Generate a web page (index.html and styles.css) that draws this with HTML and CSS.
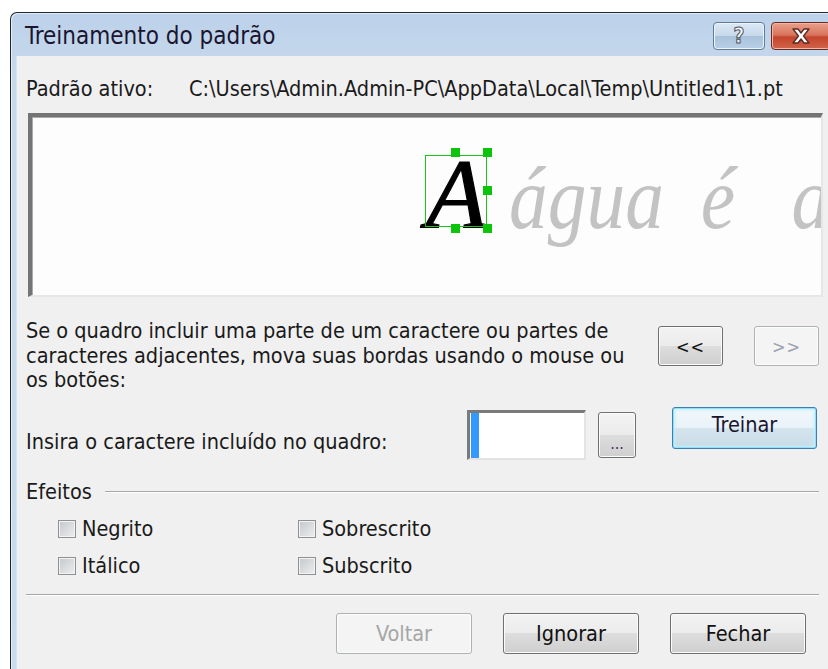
FILE: index.html
```html
<!DOCTYPE html>
<html lang="pt">
<head>
<meta charset="utf-8">
<title>Treinamento do padrão</title>
<link rel="stylesheet" href="styles.css">
</head>
<body>
<div class="window">
  <div class="titlebar">
    <span class="title">Treinamento do padrão</span>
    <div class="caption-buttons">
      <span class="cap-btn help"><span class="help-mark">?</span></span>
      <span class="cap-btn close">
        <svg width="22" height="18" viewBox="0 0 22 18">
          <path d="M3 2h5l3 4 3-4h5l-5.5 7 5.5 7h-5l-3-4-3 4H3l5.5-7z" fill="#fff" stroke="#5a2b22" stroke-width="1.3" stroke-linejoin="round"/>
        </svg>
      </span>
    </div>
  </div>

  <div class="client">
    <div class="active-row">
      <span class="active-label">Padrão ativo:</span>
      <span class="active-path">C:\Users\Admin.Admin-PC\AppData\Local\Temp\Untitled1\1.pt</span>
    </div>

    <div class="preview">
      <div class="glyph-line"><span class="glyph-current">A</span><span class="glyph-rest"><span class="word">água</span> <span class="word">é</span> <span class="word word-last">a</span></span></div>
      <div class="glyph-frame">
        <span class="handle h-top"></span>
        <span class="handle h-top-right"></span>
        <span class="handle h-right"></span>
        <span class="handle h-bottom"></span>
        <span class="handle h-bottom-right"></span>
      </div>
    </div>

    <div class="adjust-row">
      <p class="hint">Se o quadro incluir uma parte de um caractere ou partes de<br>caracteres adjacentes, mova suas bordas usando o mouse ou<br>os botões:</p>
      <div class="nav-buttons">
        <button class="btn nav">&lt;&lt;</button>
        <button class="btn nav" disabled>&gt;&gt;</button>
      </div>
    </div>

    <div class="enter-row">
      <span class="enter-label">Insira o caractere incluído no quadro:</span>
      <div class="char-input"><span class="char-sel"></span></div>
      <button class="btn more">...</button>
      <button class="btn train default">Treinar</button>
    </div>

    <div class="group-title"><span>Efeitos</span><span class="group-rule"></span></div>

    <div class="effects">
      <label class="check"><span class="box"></span>Negrito</label>
      <label class="check"><span class="box"></span>Sobrescrito</label>
      <label class="check"><span class="box"></span>Itálico</label>
      <label class="check"><span class="box"></span>Subscrito</label>
    </div>

    <div class="separator"></div>

    <div class="footer">
      <button class="btn wide" disabled>Voltar</button>
      <button class="btn wide">Ignorar</button>
      <button class="btn wide">Fechar</button>
    </div>
  </div>
</div>
</body>
</html>
```

FILE: styles.css
```css
html, body {
  margin: 0;
  padding: 0;
}

body {
  width: 828px;
  height: 669px;
  overflow: hidden;
  background: #ffffff;
  font-family: "DejaVu Sans Condensed", "DejaVu Sans", sans-serif;
  font-stretch: condensed;
  font-size: 21.5px;
  color: #000;
}

/* ---------- window frame ---------- */
.window {
  box-sizing: border-box;
  width: 826px;
  height: 680px;
  margin: 12px 0 0 10px;
  border: 1px solid #23272c;
  border-right: none;
  border-bottom: none;
  border-radius: 7px 0 0 0;
  background: linear-gradient(#bcd2ea, #c6d8ec 60px, #c9dbee);
  padding: 0 5px 0 5px;
  display: flex;
  flex-direction: column;
  box-shadow: inset 1px 1px 0 #e3ecf6;
}

.titlebar {
  height: 43px;
  display: flex;
  align-items: center;
  justify-content: space-between;
  padding-left: 9px;
}

.title {
  font-size: 24px;
  color: #1b1530;
  margin-top: 2px;
}

.caption-buttons {
  display: flex;
  gap: 6px;
  align-self: flex-start;
  margin-top: 9px;
}

.cap-btn {
  box-sizing: border-box;
  height: 28px;
  border-radius: 4px;
  display: flex;
  align-items: center;
  justify-content: center;
}

.help {
  width: 52px;
  border: 1px solid #5f7b97;
  background: linear-gradient(#dce8f4, #c7d9eb 48%, #a9c2dc 52%, #b9d0e6);
  box-shadow: inset 0 0 0 1px #eef4fa;
}

.help-mark {
  font-family: "DejaVu Sans", sans-serif;
  font-weight: bold;
  font-size: 21px;
  line-height: 1;
  color: #f4f4f4;
  -webkit-text-stroke: 1px #4d5560;
}

.close {
  width: 60px;
  border: 1px solid #6b2a1e;
  background: linear-gradient(#e9a08d, #d9755d 45%, #c4452c 55%, #d0644a);
  box-shadow: inset 0 0 0 1px #f0b6a7;
}

/* ---------- client area ---------- */
.client {
  flex: 1;
  background: #f0f0f0;
  padding: 0 8px 0 9px;
  border-left: 1px solid #d7e3f0;
}

.active-row {
  margin-top: 20px;
  line-height: 25px;
  display: flex;
  color: #1a1a1a;
}

.active-label {
  width: 163px;
  flex: none;
}

/* sunken canvas with the text line being trained */
.preview {
  position: relative;
  box-sizing: border-box;
  height: 184px;
  margin: 12px 0 0 2px;
  background: #fdfdfd;
  border-top: 4px solid #747474;
  border-left: 4px solid #747474;
  border-right: 2px solid #e6e6e6;
  border-bottom: 2px solid #e6e6e6;
  box-shadow: inset 1px 1px 0 #a9a9a9;
  overflow: hidden;
}

.glyph-line {
  position: absolute;
  left: 394px;
  top: 28px;
  font-family: "Liberation Serif", serif;
  font-style: italic;
  font-size: 100px;
  line-height: 100px;
  white-space: nowrap;
}

.glyph-current {
  color: #000;
  -webkit-text-stroke: 1.2px #000;
}

.glyph-rest {
  display: inline-block;
  color: #c3c3c3;
  font-size: 88px;
  word-spacing: 20px;
  margin-left: 22px;
  transform: scaleX(0.88);
  transform-origin: left bottom;
}

.word-last {
  margin-left: 22px;
}

.glyph-frame {
  position: absolute;
  left: 393px;
  top: 38px;
  width: 62px;
  height: 72px;
  box-sizing: border-box;
  border: 1px solid #19c419;
}

.handle {
  position: absolute;
  width: 9px;
  height: 9px;
  background: #0cc40c;
}

.h-top { left: 25px; top: -8px; }
.h-top-right { left: 57px; top: -8px; }
.h-right { left: 57px; top: 30px; }
.h-bottom { left: 25px; top: 68px; }
.h-bottom-right { left: 57px; top: 68px; }

/* ---------- adjustment hint ---------- */
.adjust-row {
  display: flex;
  justify-content: space-between;
  margin-top: 22px;
}

.hint {
  margin: 0;
  line-height: 24.5px;
  color: #1a1a1a;
}

.nav-buttons {
  display: flex;
  gap: 31px;
  margin-top: 7px;
  margin-right: 4px;
}

/* ---------- buttons ---------- */
.btn {
  box-sizing: border-box;
  font: inherit;
  color: #111;
  border: 1px solid #707070;
  border-radius: 3px;
  background: linear-gradient(#f3f3f3, #ebebeb 50%, #dddddd 50%, #cfcfcf);
  box-shadow: inset 0 0 0 1px #fbfbfb;
  padding: 0;
  cursor: default;
}

.btn:disabled {
  color: #a6a6a6;
  border-color: #adb2b5;
  background: #f4f4f4;
  box-shadow: inset 0 0 0 1px #fcfcfc;
}

.nav {
  width: 65px;
  height: 40px;
  font-size: 18px;
  letter-spacing: 1px;
}

.nav:disabled {
  color: #9aa0b0;
}

/* ---------- character entry ---------- */
.enter-row {
  display: flex;
  align-items: flex-start;
  margin-top: 14px;
  height: 53px;
}

.enter-label {
  width: 441px;
  flex: none;
  margin-top: 22px;
  line-height: 25px;
  color: #1a1a1a;
}

.char-input {
  box-sizing: border-box;
  width: 119px;
  height: 50px;
  margin-top: 3px;
  background: #fff;
  border-top: 3px solid #7a7a7a;
  border-left: 3px solid #7a7a7a;
  border-right: 2px solid #e3e3e3;
  border-bottom: 2px solid #e3e3e3;
  padding: 0 0 0 1px;
}

.char-sel {
  display: block;
  width: 8px;
  height: 100%;
  background: #3399ff;
}

.more {
  width: 38px;
  height: 46px;
  margin: 5px 0 0 12px;
  font-size: 16px;
  line-height: 46px;
  padding-top: 8px;
  color: #4a2a6a;
}

.train {
  width: 145px;
  height: 42px;
  margin-left: 36px;
}

.default {
  border-color: #3c7fb1;
  background: linear-gradient(#f2f8fb, #e8f2f8 50%, #d5e5ee 50%, #c8dbe5);
  box-shadow: inset 0 0 0 1px #8fe0fa, inset 0 0 3px 2px #c4effc;
  color: #1b1530;
  padding-bottom: 6px;
}

/* ---------- effects group ---------- */
.group-title {
  display: flex;
  align-items: center;
  gap: 13px;
  margin-top: 20px;
  line-height: 24px;
  color: #1a1a1a;
  margin-right: 4px;
}

.group-rule {
  flex: 1;
  height: 1px;
  background: #a6a6a6;
  border-bottom: 1px solid #fff;
}

.effects {
  display: grid;
  grid-template-columns: 240px 240px;
  row-gap: 13px;
  margin: 13px 0 0 32px;
}

.check {
  display: flex;
  align-items: center;
  gap: 6px;
  line-height: 24px;
  color: #1a1a1a;
}

.box {
  box-sizing: border-box;
  width: 18px;
  height: 18px;
  border: 1px solid #8e8f8f;
  background: linear-gradient(135deg, #c3c7cc, #eeeeef);
  box-shadow: inset 0 0 0 1px #f4f4f4;
}

.separator {
  height: 1px;
  background: #a6a6a6;
  border-bottom: 1px solid #fff;
  margin: 16px 4px 0 0;
}

.footer {
  display: flex;
  justify-content: flex-end;
  gap: 31px;
  margin: 17px 17px 0 0;
}

.wide {
  width: 136px;
  height: 41px;
}
```
